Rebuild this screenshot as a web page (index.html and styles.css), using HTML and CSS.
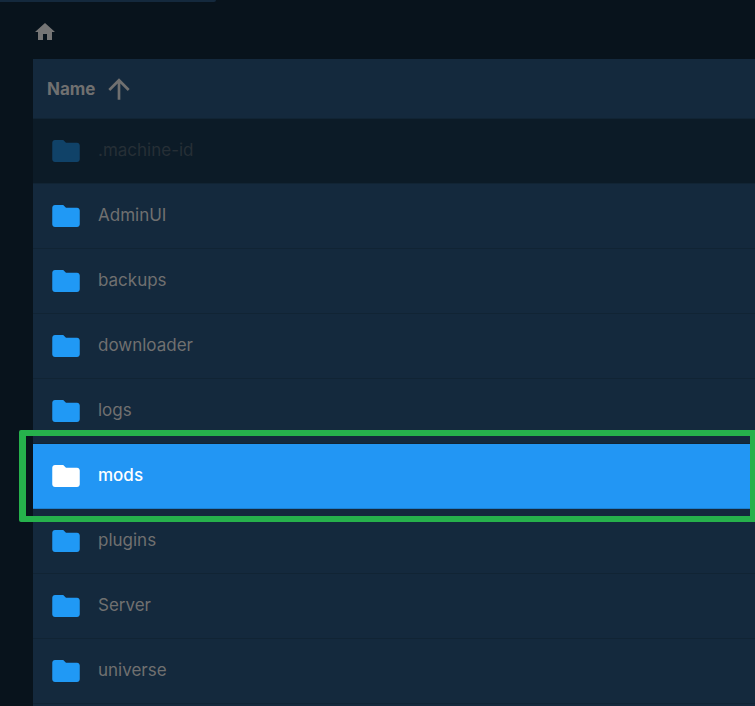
FILE: index.html
```
<!DOCTYPE html>
<html lang="en">
<head>
  <meta charset="UTF-8">
  <title>File Manager</title>
  <link rel="stylesheet" href="styles.css">
</head>
<body>

  <svg class="sprite" aria-hidden="true">
    <symbol id="folder" viewBox="2 4 20 16">
      <path d="M10 4H4c-1.1 0-1.99.9-1.99 2L2 18c0 1.1.9 2 2 2h16c1.1 0 2-.9 2-2V8c0-1.1-.9-2-2-2h-8l-2-2z"/>
    </symbol>
  </svg>

  <div class="tab"></div>

  <nav class="breadcrumb">
    <a href="#" aria-label="Home">
      <svg viewBox="0 0 24 24"><path d="M10 20v-6h4v6h5v-8h3L12 3 2 12h3v8z"/></svg>
    </a>
  </nav>

  <main class="files">
    <table>
      <thead>
        <tr>
          <th>
            <button type="button" class="sort">
              Name
              <svg viewBox="0 0 24 24"><path d="M4 12l1.41 1.41L11 7.83V20h2V7.83l5.58 5.59L20 12l-8-8-8 8z"/></svg>
            </button>
          </th>
        </tr>
      </thead>
      <tbody>
        <tr class="disabled"><td><div class="entry"><svg><use href="#folder"/></svg><span>.machine-id</span></div></td></tr>
        <tr><td><div class="entry"><svg><use href="#folder"/></svg><span>AdminUI</span></div></td></tr>
        <tr><td><div class="entry"><svg><use href="#folder"/></svg><span>backups</span></div></td></tr>
        <tr><td><div class="entry"><svg><use href="#folder"/></svg><span>downloader</span></div></td></tr>
        <tr><td><div class="entry"><svg><use href="#folder"/></svg><span>logs</span></div></td></tr>
        <tr class="selected"><td><div class="entry"><svg><use href="#folder"/></svg><span>mods</span></div><div class="marker"></div></td></tr>
        <tr><td><div class="entry"><svg><use href="#folder"/></svg><span>plugins</span></div></td></tr>
        <tr><td><div class="entry"><svg><use href="#folder"/></svg><span>Server</span></div></td></tr>
        <tr><td><div class="entry"><svg><use href="#folder"/></svg><span>universe</span></div></td></tr>
      </tbody>
    </table>
  </main>

</body>
</html>
```
FILE: styles.css
```
* {
  box-sizing: border-box;
}

body {
  margin: 0;
  min-height: 100vh;
  display: flex;
  flex-direction: column;
  background-color: #08131c;
  color: #707070;
  font-family: Inter, "Open Sans", sans-serif;
  font-size: 17px;
  line-height: 24px;
}

svg {
  display: block;
  fill: currentColor;
}

.sprite {
  display: none;
}

.tab {
  width: 216px;
  height: 2px;
  background-color: #14293d;
  border-bottom-right-radius: 4px;
}

.breadcrumb {
  padding: 18px 33px 15px;
}

.breadcrumb a {
  display: block;
  width: 24px;
  color: #757575;
}

.files {
  flex: 1;
  margin-left: 33px;
  background-color: #14293d;
}

table {
  width: 100%;
  border-collapse: separate;
  border-spacing: 0;
}

th {
  height: 60px;
  padding: 0 14px;
  border-bottom: 1px solid #112434;
  text-align: left;
}

.sort {
  display: flex;
  align-items: center;
  gap: 8px;
  padding: 0;
  border: 0;
  background: none;
  color: inherit;
  font: inherit;
  font-weight: 700;
  cursor: pointer;
}

.sort svg {
  width: 32px;
  height: 32px;
}

td {
  height: 65px;
  padding: 0 19px;
  border-bottom: 1px solid #112434;
  position: relative;
}

.entry {
  display: flex;
  align-items: center;
  gap: 18px;
}

.entry svg {
  width: 28px;
  height: 22px;
  color: #2099f5;
}

.entry span {
  padding-bottom: 2px;
}

.disabled td {
  background-color: #0c1b27;
  color: #262f36;
}

.disabled svg {
  color: #104268;
}

.selected td {
  background-color: #2296f4;
  border-bottom-color: #1c7fd0;
  color: #fff;
  font-weight: 500;
}

.selected svg {
  color: #fff;
}

/* frame around the selected folder */
.marker {
  position: absolute;
  inset: -14px 0 -14px -14px;
  border: 6px solid #26b14c;
  border-left-width: 7px;
  border-right-width: 5px;
  border-radius: 2px 0 0 2px;
  z-index: 1;
}
```
